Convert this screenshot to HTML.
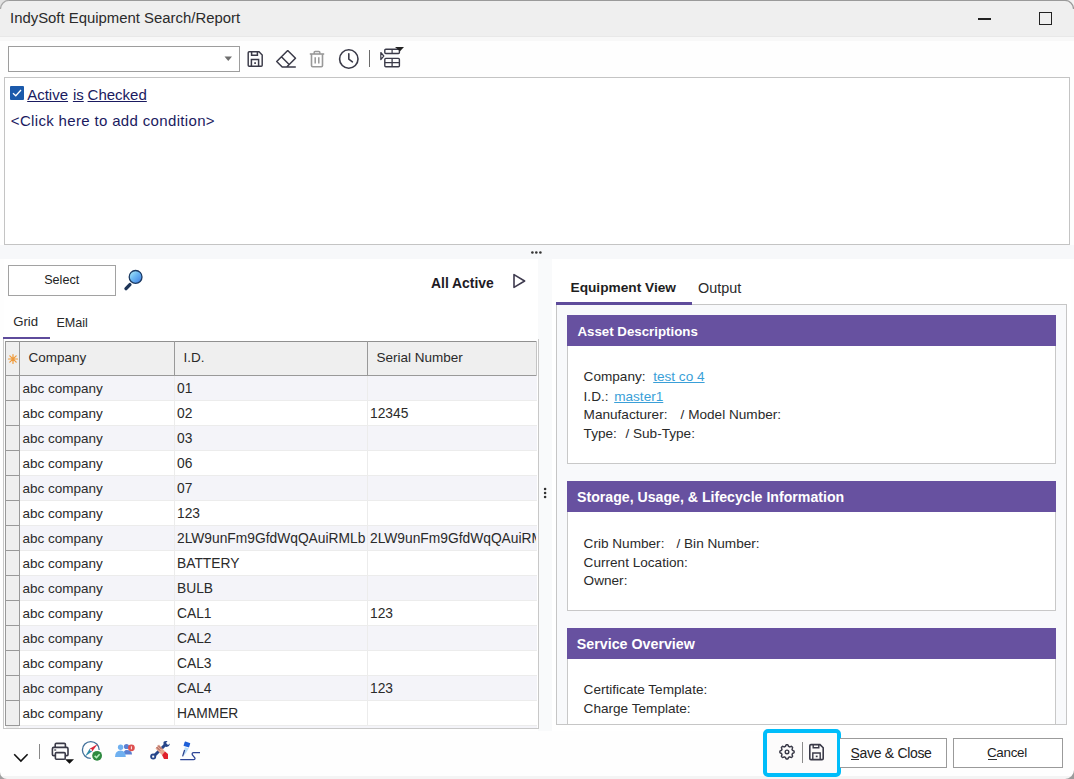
<!DOCTYPE html>
<html><head><meta charset="utf-8"><title>IndySoft Equipment Search/Report</title>
<style>
*{box-sizing:border-box;margin:0;padding:0}
html,body{width:1074px;height:779px;overflow:hidden;background:#fafafa;font-family:"Liberation Sans",sans-serif;color:#222;position:relative}
.a{position:absolute}
.t{position:absolute;white-space:pre;line-height:1}
svg{overflow:visible}
</style></head><body>
<div class="a" style="left:0px;top:0px;width:1074px;height:37px;background:#efefef"></div>
<div class="a" style="left:0px;top:36px;width:1074px;height:1px;background:#e8e8e8"></div>
<div class="a" style="left:0px;top:37px;width:1074px;height:742px;background:#fefefe"></div>
<div class="a" style="left:0px;top:37px;width:1074px;height:4px;background:#f8f8f8"></div>
<div class="a" style="left:0px;top:245px;width:1074px;height:14px;background:#f7f8fa"></div>
<div class="a" style="left:538px;top:259px;width:14px;height:472px;background:#f9fafb"></div>
<div class="a" style="left:0px;top:776px;width:1074px;height:3px;background:#f4f4f4"></div>
<div class="a" style="left:0px;top:0px;width:1074px;height:1px;background:#9a9a9a"></div>
<div class="t " style="left:10px;top:11.18px;font-size:14.9px;color:#2b2b2b;">IndySoft Equipment Search/Report</div>
<div class="a" style="left:978px;top:18px;width:13px;height:1.6px;background:#222"></div>
<div class="a" style="left:1039px;top:12px;width:13px;height:13px;border:1.5px solid #222"></div>
<div class="a" style="left:8px;top:46px;width:232px;height:26px;background:#fff;border:1px solid #9d9d9d"></div>
<svg class="a" style="left:224px;top:56px" width="9" height="6"><path d="M0.5 0.5 L8 0.5 L4.25 5 Z" fill="#6e6e6e"/></svg>
<svg class="a" style="left:246px;top:49px" width="19" height="20" viewBox="0 0 19 20">
<path d="M3.2 2.8 H13 L16.2 6 V16.2 Q16.2 17.2 15.2 17.2 H3.2 Q2.2 17.2 2.2 16.2 V3.8 Q2.2 2.8 3.2 2.8 Z" fill="none" stroke="#3a3a48" stroke-width="1.45"/>
<path d="M5.6 2.8 V6.2 H11.4 V2.8" fill="none" stroke="#3a3a48" stroke-width="1.5"/>
<path d="M5.4 17.2 V10.6 H12.6 V17.2" fill="none" stroke="#3a3a48" stroke-width="1.5"/>
<rect x="8.2" y="13.3" width="1.8" height="1.6" fill="#3a3a48"/>
</svg>
<svg class="a" style="left:274px;top:48px" width="24" height="22" viewBox="0 0 24 22">
<path d="M13.7 2.5 L21.5 10.2 L12.7 19 M13.7 2.5 L2.7 13.5 L8.2 19 H21.8 M7.4 8.8 L15.15 16.55" fill="none" stroke="#3a3a48" stroke-width="1.5" stroke-linejoin="round"/>
</svg>
<svg class="a" style="left:308px;top:49px" width="18" height="20" viewBox="0 0 18 20">
<path d="M1.8 5 H16.2" stroke="#999999" stroke-width="1.6" fill="none"/>
<path d="M6.2 5 V3.3 Q6.2 2.4 7.1 2.4 H10.9 Q11.8 2.4 11.8 3.3 V5" stroke="#999999" stroke-width="1.5" fill="none"/>
<path d="M3.5 5 V16.6 Q3.5 17.8 4.7 17.8 H13.3 Q14.5 17.8 14.5 16.6 V5" stroke="#999999" stroke-width="1.6" fill="none"/>
<path d="M7.2 8.2 V14.6 M10.8 8.2 V14.6" stroke="#999999" stroke-width="1.5" fill="none"/>
</svg>
<svg class="a" style="left:337px;top:47px" width="24" height="24" viewBox="0 0 24 24">
<circle cx="11.8" cy="12" r="9.2" fill="none" stroke="#3a3a48" stroke-width="1.6"/>
<path d="M11.8 6.8 V12.2 L15.4 14.8" fill="none" stroke="#3a3a48" stroke-width="1.6" stroke-linecap="round" stroke-linejoin="round"/>
</svg>
<div class="a" style="left:369px;top:50px;width:1px;height:17px;background:#6a6a6a"></div>
<svg class="a" style="left:378px;top:45px" width="28" height="25" viewBox="0 0 28 25">
<rect x="6.8" y="4.2" width="14.6" height="4.3" rx="1" fill="none" stroke="#3a3a48" stroke-width="1.4"/>
<path d="M14.1 4.2 V8.5" stroke="#3a3a48" stroke-width="1.2"/>
<rect x="6.8" y="13.4" width="14.6" height="8.4" rx="1" fill="none" stroke="#3a3a48" stroke-width="1.4"/>
<path d="M14.1 13.4 V21.8 M6.8 17.6 H21.4" stroke="#3a3a48" stroke-width="1.3"/>
<path d="M2.8 7.5 L5.8 11 L2.8 14.5 Z" fill="none" stroke="#3a3a48" stroke-width="1.2" stroke-linejoin="round"/>
<path d="M17 2 H26 L22 6.2 Z" fill="#222"/>
</svg>
<div class="a" style="left:4px;top:77px;width:1066px;height:168px;background:#fff;border:1px solid #c4c4c4"></div>
<svg class="a" style="left:10px;top:86px" width="14" height="14" viewBox="0 0 14 14">
<rect x="0" y="0" width="14" height="14" rx="1" fill="#1b5aab"/>
<path d="M3 7.2 L5.8 9.8 L11 4" fill="none" stroke="#fff" stroke-width="1.3"/>
</svg>
<div class="t " style="left:27.2px;top:87.30px;font-size:15px;color:#1a1a60;text-decoration:underline;text-underline-offset:0.6px;">Active</div>
<div class="t " style="left:72.9px;top:87.30px;font-size:15px;color:#1a1a60;text-decoration:underline;text-underline-offset:0.6px;">is</div>
<div class="t " style="left:87.6px;top:87.30px;font-size:15px;color:#1a1a60;text-decoration:underline;text-underline-offset:0.6px;">Checked</div>
<div class="t " style="left:10.8px;top:113.00px;font-size:15px;color:#1a1a60;letter-spacing:0.34px;">&lt;Click here to add condition&gt;</div>
<svg class="a" style="left:528px;top:248px" width="16" height="8"><circle cx="4.4" cy="4.5" r="1.3" fill="#333"/><circle cx="8.3" cy="4.5" r="1.3" fill="#333"/><circle cx="12.4" cy="4.5" r="1.3" fill="#333"/></svg>
<div class="a" style="left:4px;top:259px;width:534px;height:472px;background:#fff"></div>
<div class="a" style="left:8px;top:265px;width:108px;height:31px;background:#fff;border:1px solid #a2a2a2"></div>
<div class="t " style="left:44.2px;top:274.33px;font-size:12.6px;">Select</div>
<svg class="a" style="left:121px;top:267px" width="26" height="26" viewBox="0 0 26 26">
<defs><linearGradient id="lens" x1="0" y1="0" x2="1" y2="1"><stop offset="0" stop-color="#b8f4f8"/><stop offset="0.45" stop-color="#6cb8f2"/><stop offset="1" stop-color="#3c78e0"/></linearGradient></defs>
<path d="M5 21.6 L8.9 17.6" stroke="#1e3558" stroke-width="3.4" stroke-linecap="round"/>
<circle cx="14.6" cy="9.9" r="6.4" fill="url(#lens)" stroke="#1c3a62" stroke-width="1.3"/>
</svg>
<div class="t " style="left:431px;top:276.93px;font-size:13.9px;font-weight:700;color:#1e1a24;">All Active</div>
<svg class="a" style="left:511px;top:272px" width="16" height="18" viewBox="0 0 16 18">
<path d="M3 2.6 L13.6 9 L3 15.4 Z" fill="none" stroke="#3e3a4e" stroke-width="1.6" stroke-linejoin="round"/>
</svg>
<div class="t " style="left:13.2px;top:315.42px;font-size:13.2px;color:#2a2a2a;">Grid</div>
<div class="t " style="left:56.4px;top:316.93px;font-size:12.6px;color:#2a2a2a;">EMail</div>
<div class="a" style="left:3px;top:339px;width:535px;height:1px;background:#d0d0d0"></div>
<div class="a" style="left:3px;top:337px;width:47px;height:3px;background:#5e4b9b"></div>
<div class="a" style="left:3px;top:339px;width:536px;height:390px;background:#fff;border:1px solid #c8c8c8;border-top:none"></div>
<div class="a" style="left:5px;top:341px;width:533px;height:385px;background:#fff"></div>
<div class="a" style="left:5px;top:341px;width:532px;height:35px;background:#efefef;border-top:1px solid #909090;border-bottom:1px solid #999999"></div>
<div class="a" style="left:5px;top:341px;width:1px;height:385px;background:#999999"></div>
<div class="a" style="left:19px;top:341px;width:1px;height:385px;background:#999999"></div>
<div class="a" style="left:174px;top:341px;width:1px;height:35px;background:#999999"></div>
<div class="a" style="left:367px;top:341px;width:1px;height:35px;background:#999999"></div>
<div class="a" style="left:536px;top:341px;width:1px;height:35px;background:#c4c4c4"></div>
<svg class="a" style="left:7px;top:353px" width="12" height="12" viewBox="0 0 12 12">
<g stroke="#ef9a3a" stroke-width="1.2" stroke-linecap="round">
<path d="M6 1.5 V10.5 M1.5 6 H10.5 M2.8 2.8 L9.2 9.2 M9.2 2.8 L2.8 9.2"/></g></svg>
<div class="t " style="left:28.5px;top:351.37px;font-size:13.5px;color:#2a2a2a;">Company</div>
<div class="t " style="left:183.6px;top:351.37px;font-size:13.5px;color:#2a2a2a;">I.D.</div>
<div class="t " style="left:376.4px;top:351.37px;font-size:13.5px;color:#2a2a2a;">Serial Number</div>
<div class="a" style="left:20px;top:376px;width:517px;height:24px;background:#f4f4f9"></div>
<div class="a" style="left:6px;top:376px;width:13px;height:24px;background:#efefef"></div>
<div class="a" style="left:6px;top:400px;width:13px;height:1px;background:#999999"></div>
<div class="a" style="left:20px;top:400px;width:517px;height:1px;background:#ececec"></div>
<div class="a" style="left:174px;top:376px;width:1px;height:24px;background:#ececec"></div>
<div class="a" style="left:367px;top:376px;width:1px;height:24px;background:#ececec"></div>
<div class="t " style="left:22.5px;top:381.97px;font-size:13.5px;color:#2a2a2a;">abc company</div>
<div class="t " style="left:177px;top:381.72px;font-size:13.8px;color:#2a2a2a;width:189px;overflow:hidden;">01</div>
<div class="a" style="left:20px;top:401px;width:517px;height:24px;background:#ffffff"></div>
<div class="a" style="left:6px;top:401px;width:13px;height:24px;background:#efefef"></div>
<div class="a" style="left:6px;top:425px;width:13px;height:1px;background:#999999"></div>
<div class="a" style="left:20px;top:425px;width:517px;height:1px;background:#ececec"></div>
<div class="a" style="left:174px;top:401px;width:1px;height:24px;background:#ececec"></div>
<div class="a" style="left:367px;top:401px;width:1px;height:24px;background:#ececec"></div>
<div class="t " style="left:22.5px;top:406.97px;font-size:13.5px;color:#2a2a2a;">abc company</div>
<div class="t " style="left:177px;top:406.72px;font-size:13.8px;color:#2a2a2a;width:189px;overflow:hidden;">02</div>
<div class="t " style="left:370px;top:406.72px;font-size:13.8px;color:#2a2a2a;width:166px;overflow:hidden;">12345</div>
<div class="a" style="left:20px;top:426px;width:517px;height:24px;background:#f4f4f9"></div>
<div class="a" style="left:6px;top:426px;width:13px;height:24px;background:#efefef"></div>
<div class="a" style="left:6px;top:450px;width:13px;height:1px;background:#999999"></div>
<div class="a" style="left:20px;top:450px;width:517px;height:1px;background:#ececec"></div>
<div class="a" style="left:174px;top:426px;width:1px;height:24px;background:#ececec"></div>
<div class="a" style="left:367px;top:426px;width:1px;height:24px;background:#ececec"></div>
<div class="t " style="left:22.5px;top:431.97px;font-size:13.5px;color:#2a2a2a;">abc company</div>
<div class="t " style="left:177px;top:431.72px;font-size:13.8px;color:#2a2a2a;width:189px;overflow:hidden;">03</div>
<div class="a" style="left:20px;top:451px;width:517px;height:24px;background:#ffffff"></div>
<div class="a" style="left:6px;top:451px;width:13px;height:24px;background:#efefef"></div>
<div class="a" style="left:6px;top:475px;width:13px;height:1px;background:#999999"></div>
<div class="a" style="left:20px;top:475px;width:517px;height:1px;background:#ececec"></div>
<div class="a" style="left:174px;top:451px;width:1px;height:24px;background:#ececec"></div>
<div class="a" style="left:367px;top:451px;width:1px;height:24px;background:#ececec"></div>
<div class="t " style="left:22.5px;top:456.97px;font-size:13.5px;color:#2a2a2a;">abc company</div>
<div class="t " style="left:177px;top:456.72px;font-size:13.8px;color:#2a2a2a;width:189px;overflow:hidden;">06</div>
<div class="a" style="left:20px;top:476px;width:517px;height:24px;background:#f4f4f9"></div>
<div class="a" style="left:6px;top:476px;width:13px;height:24px;background:#efefef"></div>
<div class="a" style="left:6px;top:500px;width:13px;height:1px;background:#999999"></div>
<div class="a" style="left:20px;top:500px;width:517px;height:1px;background:#ececec"></div>
<div class="a" style="left:174px;top:476px;width:1px;height:24px;background:#ececec"></div>
<div class="a" style="left:367px;top:476px;width:1px;height:24px;background:#ececec"></div>
<div class="t " style="left:22.5px;top:481.97px;font-size:13.5px;color:#2a2a2a;">abc company</div>
<div class="t " style="left:177px;top:481.72px;font-size:13.8px;color:#2a2a2a;width:189px;overflow:hidden;">07</div>
<div class="a" style="left:20px;top:501px;width:517px;height:24px;background:#ffffff"></div>
<div class="a" style="left:6px;top:501px;width:13px;height:24px;background:#efefef"></div>
<div class="a" style="left:6px;top:525px;width:13px;height:1px;background:#999999"></div>
<div class="a" style="left:20px;top:525px;width:517px;height:1px;background:#ececec"></div>
<div class="a" style="left:174px;top:501px;width:1px;height:24px;background:#ececec"></div>
<div class="a" style="left:367px;top:501px;width:1px;height:24px;background:#ececec"></div>
<div class="t " style="left:22.5px;top:506.97px;font-size:13.5px;color:#2a2a2a;">abc company</div>
<div class="t " style="left:177px;top:506.72px;font-size:13.8px;color:#2a2a2a;width:189px;overflow:hidden;">123</div>
<div class="a" style="left:20px;top:526px;width:517px;height:24px;background:#f4f4f9"></div>
<div class="a" style="left:6px;top:526px;width:13px;height:24px;background:#efefef"></div>
<div class="a" style="left:6px;top:550px;width:13px;height:1px;background:#999999"></div>
<div class="a" style="left:20px;top:550px;width:517px;height:1px;background:#ececec"></div>
<div class="a" style="left:174px;top:526px;width:1px;height:24px;background:#ececec"></div>
<div class="a" style="left:367px;top:526px;width:1px;height:24px;background:#ececec"></div>
<div class="t " style="left:22.5px;top:531.97px;font-size:13.5px;color:#2a2a2a;">abc company</div>
<div class="t " style="left:177px;top:531.72px;font-size:13.8px;color:#2a2a2a;width:189px;overflow:hidden;">2LW9unFm9GfdWqQAuiRMLb</div>
<div class="t " style="left:370px;top:531.72px;font-size:13.8px;color:#2a2a2a;width:166px;overflow:hidden;">2LW9unFm9GfdWqQAuiRMLb</div>
<div class="a" style="left:20px;top:551px;width:517px;height:24px;background:#ffffff"></div>
<div class="a" style="left:6px;top:551px;width:13px;height:24px;background:#efefef"></div>
<div class="a" style="left:6px;top:575px;width:13px;height:1px;background:#999999"></div>
<div class="a" style="left:20px;top:575px;width:517px;height:1px;background:#ececec"></div>
<div class="a" style="left:174px;top:551px;width:1px;height:24px;background:#ececec"></div>
<div class="a" style="left:367px;top:551px;width:1px;height:24px;background:#ececec"></div>
<div class="t " style="left:22.5px;top:556.97px;font-size:13.5px;color:#2a2a2a;">abc company</div>
<div class="t " style="left:177px;top:556.72px;font-size:13.8px;color:#2a2a2a;width:189px;overflow:hidden;">BATTERY</div>
<div class="a" style="left:20px;top:576px;width:517px;height:24px;background:#f4f4f9"></div>
<div class="a" style="left:6px;top:576px;width:13px;height:24px;background:#efefef"></div>
<div class="a" style="left:6px;top:600px;width:13px;height:1px;background:#999999"></div>
<div class="a" style="left:20px;top:600px;width:517px;height:1px;background:#ececec"></div>
<div class="a" style="left:174px;top:576px;width:1px;height:24px;background:#ececec"></div>
<div class="a" style="left:367px;top:576px;width:1px;height:24px;background:#ececec"></div>
<div class="t " style="left:22.5px;top:581.97px;font-size:13.5px;color:#2a2a2a;">abc company</div>
<div class="t " style="left:177px;top:581.72px;font-size:13.8px;color:#2a2a2a;width:189px;overflow:hidden;">BULB</div>
<div class="a" style="left:20px;top:601px;width:517px;height:24px;background:#ffffff"></div>
<div class="a" style="left:6px;top:601px;width:13px;height:24px;background:#efefef"></div>
<div class="a" style="left:6px;top:625px;width:13px;height:1px;background:#999999"></div>
<div class="a" style="left:20px;top:625px;width:517px;height:1px;background:#ececec"></div>
<div class="a" style="left:174px;top:601px;width:1px;height:24px;background:#ececec"></div>
<div class="a" style="left:367px;top:601px;width:1px;height:24px;background:#ececec"></div>
<div class="t " style="left:22.5px;top:606.97px;font-size:13.5px;color:#2a2a2a;">abc company</div>
<div class="t " style="left:177px;top:606.72px;font-size:13.8px;color:#2a2a2a;width:189px;overflow:hidden;">CAL1</div>
<div class="t " style="left:370px;top:606.72px;font-size:13.8px;color:#2a2a2a;width:166px;overflow:hidden;">123</div>
<div class="a" style="left:20px;top:626px;width:517px;height:24px;background:#f4f4f9"></div>
<div class="a" style="left:6px;top:626px;width:13px;height:24px;background:#efefef"></div>
<div class="a" style="left:6px;top:650px;width:13px;height:1px;background:#999999"></div>
<div class="a" style="left:20px;top:650px;width:517px;height:1px;background:#ececec"></div>
<div class="a" style="left:174px;top:626px;width:1px;height:24px;background:#ececec"></div>
<div class="a" style="left:367px;top:626px;width:1px;height:24px;background:#ececec"></div>
<div class="t " style="left:22.5px;top:631.97px;font-size:13.5px;color:#2a2a2a;">abc company</div>
<div class="t " style="left:177px;top:631.72px;font-size:13.8px;color:#2a2a2a;width:189px;overflow:hidden;">CAL2</div>
<div class="a" style="left:20px;top:651px;width:517px;height:24px;background:#ffffff"></div>
<div class="a" style="left:6px;top:651px;width:13px;height:24px;background:#efefef"></div>
<div class="a" style="left:6px;top:675px;width:13px;height:1px;background:#999999"></div>
<div class="a" style="left:20px;top:675px;width:517px;height:1px;background:#ececec"></div>
<div class="a" style="left:174px;top:651px;width:1px;height:24px;background:#ececec"></div>
<div class="a" style="left:367px;top:651px;width:1px;height:24px;background:#ececec"></div>
<div class="t " style="left:22.5px;top:656.97px;font-size:13.5px;color:#2a2a2a;">abc company</div>
<div class="t " style="left:177px;top:656.72px;font-size:13.8px;color:#2a2a2a;width:189px;overflow:hidden;">CAL3</div>
<div class="a" style="left:20px;top:676px;width:517px;height:24px;background:#f4f4f9"></div>
<div class="a" style="left:6px;top:676px;width:13px;height:24px;background:#efefef"></div>
<div class="a" style="left:6px;top:700px;width:13px;height:1px;background:#999999"></div>
<div class="a" style="left:20px;top:700px;width:517px;height:1px;background:#ececec"></div>
<div class="a" style="left:174px;top:676px;width:1px;height:24px;background:#ececec"></div>
<div class="a" style="left:367px;top:676px;width:1px;height:24px;background:#ececec"></div>
<div class="t " style="left:22.5px;top:681.97px;font-size:13.5px;color:#2a2a2a;">abc company</div>
<div class="t " style="left:177px;top:681.72px;font-size:13.8px;color:#2a2a2a;width:189px;overflow:hidden;">CAL4</div>
<div class="t " style="left:370px;top:681.72px;font-size:13.8px;color:#2a2a2a;width:166px;overflow:hidden;">123</div>
<div class="a" style="left:20px;top:701px;width:517px;height:24px;background:#ffffff"></div>
<div class="a" style="left:6px;top:701px;width:13px;height:24px;background:#efefef"></div>
<div class="a" style="left:6px;top:725px;width:13px;height:1px;background:#999999"></div>
<div class="a" style="left:20px;top:725px;width:517px;height:1px;background:#ececec"></div>
<div class="a" style="left:174px;top:701px;width:1px;height:24px;background:#ececec"></div>
<div class="a" style="left:367px;top:701px;width:1px;height:24px;background:#ececec"></div>
<div class="t " style="left:22.5px;top:706.97px;font-size:13.5px;color:#2a2a2a;">abc company</div>
<div class="t " style="left:177px;top:706.72px;font-size:13.8px;color:#2a2a2a;width:189px;overflow:hidden;">HAMMER</div>
<div class="a" style="left:20px;top:726px;width:517px;height:2px;background:#f4f4f9"></div>
<div class="a" style="left:6px;top:726px;width:13px;height:2px;background:#efefef"></div>
<svg class="a" style="left:541px;top:484px" width="8" height="18"><circle cx="4.1" cy="5" r="1.3" fill="#333"/><circle cx="4.1" cy="9" r="1.3" fill="#333"/><circle cx="4.1" cy="13" r="1.3" fill="#333"/></svg>
<div class="a" style="left:552px;top:259px;width:519px;height:472px;background:#fff"></div>
<div class="t " style="left:570.5px;top:281.10px;font-size:13.7px;font-weight:700;color:#1e1e1e;">Equipment View</div>
<div class="t " style="left:698px;top:280.51px;font-size:14.4px;color:#2a2a2a;">Output</div>
<div class="a" style="left:556px;top:304px;width:511px;height:421px;background:#f8f9fb;border:1px solid #c6c6c6"></div>
<div class="a" style="left:556px;top:302px;width:136px;height:3px;background:#5e4b9b"></div>
<div class="a" style="left:567px;top:315px;width:489px;height:149px;background:#fff;border:1px solid #c8c8c8"></div>
<div class="a" style="left:567px;top:315px;width:489px;height:31px;background:#6751a0"></div>
<div class="t " style="left:577.4px;top:324.84px;font-size:13.3px;font-weight:700;color:#fff;">Asset Descriptions</div>
<div class="t " style="left:583.6px;top:370.48px;font-size:13.6px;color:#2a2a2a;">Company:</div>
<div class="t " style="left:653.2px;top:370.48px;font-size:13.6px;color:#3a9fd8;text-decoration:underline;">test co 4</div>
<div class="t " style="left:583.6px;top:389.78px;font-size:13.6px;color:#2a2a2a;">I.D.:</div>
<div class="t " style="left:614.2px;top:389.78px;font-size:13.6px;color:#3a9fd8;text-decoration:underline;">master1</div>
<div class="t " style="left:583.6px;top:408.48px;font-size:13.6px;color:#2a2a2a;">Manufacturer:</div>
<div class="t " style="left:680.6px;top:408.48px;font-size:13.6px;color:#2a2a2a;">/ Model Number:</div>
<div class="t " style="left:583.6px;top:427.28px;font-size:13.6px;color:#2a2a2a;">Type:</div>
<div class="t " style="left:625.4px;top:427.28px;font-size:13.6px;color:#2a2a2a;">/ Sub-Type:</div>
<div class="a" style="left:567px;top:481px;width:489px;height:130px;background:#fff;border:1px solid #c8c8c8"></div>
<div class="a" style="left:567px;top:481px;width:489px;height:31px;background:#6751a0"></div>
<div class="t " style="left:577px;top:490.12px;font-size:14.15px;font-weight:700;color:#fff;">Storage, Usage, &amp; Lifecycle Information</div>
<div class="t " style="left:583.6px;top:536.68px;font-size:13.6px;color:#2a2a2a;">Crib Number:</div>
<div class="t " style="left:676.5px;top:536.68px;font-size:13.6px;color:#2a2a2a;">/ Bin Number:</div>
<div class="t " style="left:583.6px;top:555.68px;font-size:13.6px;color:#2a2a2a;">Current Location:</div>
<div class="t " style="left:583.6px;top:574.38px;font-size:13.6px;color:#2a2a2a;">Owner:</div>
<div class="a" style="left:567px;top:628px;width:489px;height:97px;background:#fff;border:1px solid #c8c8c8;border-bottom:none"></div>
<div class="a" style="left:567px;top:628px;width:489px;height:31px;background:#6751a0"></div>
<div class="t " style="left:576.8px;top:636.73px;font-size:14.25px;font-weight:700;color:#fff;">Service Overview</div>
<div class="t " style="left:583.6px;top:683.08px;font-size:13.6px;color:#2a2a2a;">Certificate Template:</div>
<div class="t " style="left:583.6px;top:702.08px;font-size:13.6px;color:#2a2a2a;">Charge Template:</div>
<div class="a" style="left:556px;top:724px;width:511px;height:1px;background:#c6c6c6"></div>
<svg class="a" style="left:12px;top:752px" width="18" height="11" viewBox="0 0 18 11">
<path d="M2.2 2.3 L8.9 9 L15.6 2.3" fill="none" stroke="#111" stroke-width="1.6"/></svg>
<div class="a" style="left:39px;top:744px;width:1px;height:15px;background:#888"></div>
<svg class="a" style="left:50px;top:741px" width="26" height="25" viewBox="0 0 26 25">
<path d="M5.2 6.6 V3.6 Q5.2 2.4 6.4 2.4 H14.2 Q15.4 2.4 15.4 3.6 V6.6" fill="none" stroke="#3a3a48" stroke-width="1.6"/>
<path d="M5 14.6 H3.6 Q2.4 14.6 2.4 13.4 V7.8 Q2.4 6.4 3.8 6.4 H16.6 Q18 6.4 18 7.8 V13.4 Q18 14.6 16.8 14.6 H15.4" fill="none" stroke="#3a3a48" stroke-width="1.6"/>
<rect x="5.4" y="11.6" width="9.8" height="6.6" rx="1" fill="none" stroke="#3a3a48" stroke-width="1.6"/>
<rect x="4.2" y="8.4" width="2" height="1.2" fill="#3a3a48"/>
<path d="M15 18.2 H24 L19.5 22.8 Z" fill="#111"/>
</svg>
<svg class="a" style="left:80px;top:739px" width="24" height="24" viewBox="0 0 24 24">
<path d="M10.8 19.4 A8.4 8.4 0 1 1 19.2 11" fill="none" stroke="#41709a" stroke-width="1.3"/>
<path d="M17.8 5 L12.3 12.3 L9.7 9.7 Z" fill="#d8283a"/>
<path d="M5 17.4 L9.7 9.7 L12.3 12.3 Z" fill="#2f8aa8"/>
<circle cx="11" cy="11" r="0.9" fill="#fff"/>
<circle cx="17.1" cy="16.8" r="4.9" fill="#2e8a40"/>
<path d="M14.6 16.9 L16.5 18.6 L19.6 15.2" fill="none" stroke="#b8f0c0" stroke-width="1.5"/>
</svg>
<svg class="a" style="left:113px;top:742px" width="24" height="18" viewBox="0 0 24 18">
<circle cx="13.5" cy="4.5" r="2.6" fill="#5b80d2"/>
<path d="M10.5 12.5 Q10.5 8 13.5 8 Q19 8 19 12.5 Z" fill="#5b80d2"/>
<circle cx="7.6" cy="5.3" r="2.7" fill="#6fb0f0"/>
<path d="M2 15 Q2 8.5 7.6 8.5 Q12.8 8.5 12.8 15 Z" fill="#6fb0f0"/>
<circle cx="18.4" cy="5.8" r="3.4" fill="#de5050"/>
<path d="M18.4 4.3 V7.3" stroke="#fff" stroke-width="0.9"/>
</svg>
<svg class="a" style="left:149px;top:739px" width="22" height="22" viewBox="0 0 22 22">
<path d="M4.5 17.5 L16 6" stroke="#27468a" stroke-width="3"/>
<circle cx="4.2" cy="17.6" r="3" fill="#27468a"/>
<rect x="3.2" y="16.6" width="2" height="2" fill="#fff"/>
<path d="M14.5 3 Q14 7 17.5 8 Q20.5 7.5 21 4.5 L19 6 L17 4 L18.5 2 Q15.5 1.5 14.5 3 Z" fill="#27468a"/>
<path d="M6.5 9.5 L10 5.5 L16 12.5 L13 16 Z" fill="#e8a890"/>
<path d="M7.5 8 L11 11.5 M9 6.5 L12.5 10" stroke="#8a4a50" stroke-width="0.9"/>
<path d="M13 16 L16 12.5 L19 15 V20 H15 Z" fill="#e0202a"/>
</svg>
<svg class="a" style="left:178px;top:740px" width="24" height="22" viewBox="0 0 24 22">
<rect x="6" y="2.2" width="5.8" height="4.6" rx="0.6" fill="#1d5fd8" transform="rotate(18 9 4.5)"/>
<path d="M6.8 7.2 L10.8 8.2 L8 13 L5 16.5 Z" fill="#b8dcf8"/>
<path d="M6.6 10 L4.6 16.4" stroke="#2a3f8a" stroke-width="1.2"/>
<path d="M2.2 19.6 H15.5 Q17.5 19.6 16.8 17.8 L14.4 15 Q13.6 12.6 15.6 12.6 H22" fill="none" stroke="#2e4596" stroke-width="1.3"/>
</svg>
<div class="a" style="left:763px;top:729px;width:78px;height:48px;border:4px solid #00bdfa;border-radius:5px;background:#fcfbfb"></div>
<svg class="a" style="left:777px;top:742px" width="20" height="20" viewBox="0 0 20 20">
<path d="M10.00 2.80 L10.28 2.81 L10.56 2.82 L10.83 2.85 L11.06 3.22 L11.25 3.62 L11.41 4.03 L11.55 4.41 L11.76 4.48 L11.97 4.55 L12.18 4.63 L12.39 4.72 L12.59 4.82 L12.79 4.93 L13.15 4.76 L13.56 4.58 L13.98 4.42 L14.40 4.32 L14.61 4.50 L14.82 4.69 L15.02 4.88 L15.21 5.08 L15.40 5.29 L15.58 5.50 L15.48 5.92 L15.32 6.34 L15.14 6.75 L14.97 7.11 L15.08 7.31 L15.18 7.51 L15.27 7.72 L15.35 7.93 L15.42 8.14 L15.49 8.35 L15.87 8.49 L16.28 8.65 L16.68 8.84 L17.05 9.07 L17.08 9.34 L17.09 9.62 L17.10 9.90 L17.09 10.18 L17.08 10.46 L17.05 10.73 L16.68 10.96 L16.28 11.15 L15.87 11.31 L15.49 11.45 L15.42 11.66 L15.35 11.87 L15.27 12.08 L15.18 12.29 L15.08 12.49 L14.97 12.69 L15.14 13.05 L15.32 13.46 L15.48 13.88 L15.58 14.30 L15.40 14.51 L15.21 14.72 L15.02 14.92 L14.82 15.11 L14.61 15.30 L14.40 15.48 L13.98 15.38 L13.56 15.22 L13.15 15.04 L12.79 14.87 L12.59 14.98 L12.39 15.08 L12.18 15.17 L11.97 15.25 L11.76 15.32 L11.55 15.39 L11.41 15.77 L11.25 16.18 L11.06 16.58 L10.83 16.95 L10.56 16.98 L10.28 16.99 L10.00 17.00 L9.72 16.99 L9.44 16.98 L9.17 16.95 L8.94 16.58 L8.75 16.18 L8.59 15.77 L8.45 15.39 L8.24 15.32 L8.03 15.25 L7.82 15.17 L7.61 15.08 L7.41 14.98 L7.21 14.87 L6.85 15.04 L6.44 15.22 L6.02 15.38 L5.60 15.48 L5.39 15.30 L5.18 15.11 L4.98 14.92 L4.79 14.72 L4.60 14.51 L4.42 14.30 L4.52 13.88 L4.68 13.46 L4.86 13.05 L5.03 12.69 L4.92 12.49 L4.82 12.29 L4.73 12.08 L4.65 11.87 L4.58 11.66 L4.51 11.45 L4.13 11.31 L3.72 11.15 L3.32 10.96 L2.95 10.73 L2.92 10.46 L2.91 10.18 L2.90 9.90 L2.91 9.62 L2.92 9.34 L2.95 9.07 L3.32 8.84 L3.72 8.65 L4.13 8.49 L4.51 8.35 L4.58 8.14 L4.65 7.93 L4.73 7.72 L4.82 7.51 L4.92 7.31 L5.03 7.11 L4.86 6.75 L4.68 6.34 L4.52 5.92 L4.42 5.50 L4.60 5.29 L4.79 5.08 L4.98 4.88 L5.18 4.69 L5.39 4.50 L5.60 4.32 L6.02 4.42 L6.44 4.58 L6.85 4.76 L7.21 4.93 L7.41 4.82 L7.61 4.72 L7.82 4.63 L8.03 4.55 L8.24 4.48 L8.45 4.41 L8.59 4.03 L8.75 3.62 L8.94 3.22 L9.17 2.85 L9.44 2.82 L9.72 2.81 Z" fill="none" stroke="#3a3a48" stroke-width="1.5" stroke-linejoin="round"/>
<circle cx="10" cy="9.9" r="1.8" fill="none" stroke="#3a3a48" stroke-width="1.4"/>
</svg>
<div class="a" style="left:802px;top:742px;width:1px;height:21px;background:#8a8a8a"></div>
<svg class="a" style="left:807px;top:742px" width="19" height="20" viewBox="0 0 19 20">
<path d="M4 2.6 H13 L16.2 5.8 V16.4 Q16.2 17.6 15 17.6 H4 Q2.8 17.6 2.8 16.4 V3.8 Q2.8 2.6 4 2.6 Z" fill="none" stroke="#3a3a48" stroke-width="1.6"/>
<path d="M6.2 2.6 V5.8 H11.8 V2.6" fill="none" stroke="#3a3a48" stroke-width="1.4"/>
<path d="M5.8 17.6 V11 H13.2 V17.6" fill="none" stroke="#3a3a48" stroke-width="1.4"/>
<rect x="8.8" y="13.6" width="1.8" height="1.6" fill="#3a3a48"/>
</svg>
<div class="a" style="left:840px;top:738px;width:107px;height:30px;background:#fff;border:1px solid #9a9a9a;border-left:none"></div>
<div class="a" style="left:953px;top:738px;width:110px;height:30px;background:#fff;border:1px solid #9a9a9a"></div>
<div class="t " style="left:850.6px;top:745.95px;font-size:14px;letter-spacing:-0.32px;">Save &amp; Close</div>
<div class="a" style="left:851px;top:759px;width:8px;height:1px;background:#333"></div>
<div class="t " style="left:987px;top:746.45px;font-size:13.4px;letter-spacing:-0.3px;">Cancel</div>
<div class="a" style="left:987.5px;top:759px;width:9px;height:1px;background:#333"></div>
<svg class="a" style="left:0;top:0" width="12" height="12"><path d="M0 0 H9 A9 9 0 0 0 0 9 Z" fill="#e2e2e2"/><path d="M9 0.5 A8.5 8.5 0 0 0 0.5 9" fill="none" stroke="#a8a8a8" stroke-width="1.2"/></svg>
<svg class="a" style="left:1062px;top:0" width="12" height="12"><path d="M12 0 H3 A9 9 0 0 1 12 9 Z" fill="#f2f2f2"/><path d="M3 0.5 A8.5 8.5 0 0 1 11.5 9" fill="none" stroke="#9a9a9a" stroke-width="1.2"/></svg>
<svg class="a" style="left:1064px;top:769px" width="10" height="10"><path d="M10 10 H1 A9 9 0 0 0 10 1 Z" fill="#9c9c9c"/></svg>
<svg class="a" style="left:0;top:772px" width="7" height="7"><path d="M0 7 H7 A7 7 0 0 1 0 0 Z" fill="#a0a0a0"/></svg>
</body></html>
